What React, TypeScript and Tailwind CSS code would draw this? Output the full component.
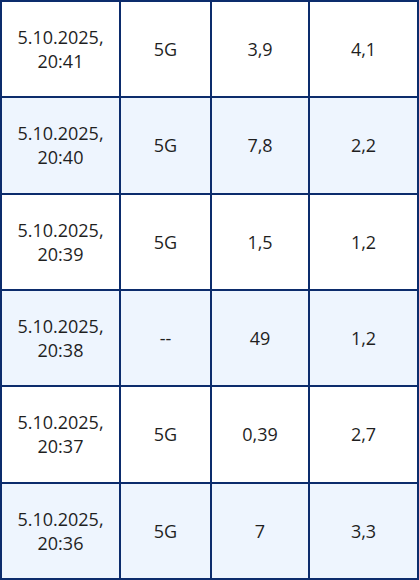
const rows = [
  { time: '20:41', net: '5G', down: '3,9', up: '4,1' },
  { time: '20:40', net: '5G', down: '7,8', up: '2,2' },
  { time: '20:39', net: '5G', down: '1,5', up: '1,2' },
  { time: '20:38', net: '--', down: '49', up: '1,2' },
  { time: '20:37', net: '5G', down: '0,39', up: '2,7' },
  { time: '20:36', net: '5G', down: '7', up: '3,3' },
];

const Cell = ({ children, shaded }: { children: React.ReactNode; shaded: boolean }) => (
  <div
    className={`flex items-center justify-center text-center leading-[24px] ${shaded ? 'bg-[#eef5fe]' : 'bg-white'}`}
  >
    {children}
  </div>
);

export default function App() {
  return (
    <div
      className="w-[419px] h-[580px] bg-[#0c2c6c] p-[2px] grid grid-cols-[117px_89px_96px_107px] grid-rows-6 gap-[2px] text-[18px] text-[#1f1f1f]"
      style={{ fontFamily: '"Open Sans", sans-serif' }}
    >
      {rows.map((r, i) => {
        const shaded = i % 2 === 1;
        return [
          <Cell key={`d${i}`} shaded={shaded}>
            <span>
              5.10.2025,
              <br />
              {r.time}
            </span>
          </Cell>,
          <Cell key={`n${i}`} shaded={shaded}>{r.net}</Cell>,
          <Cell key={`a${i}`} shaded={shaded}>{r.down}</Cell>,
          <Cell key={`b${i}`} shaded={shaded}>{r.up}</Cell>,
        ];
      })}
    </div>
  );
}
